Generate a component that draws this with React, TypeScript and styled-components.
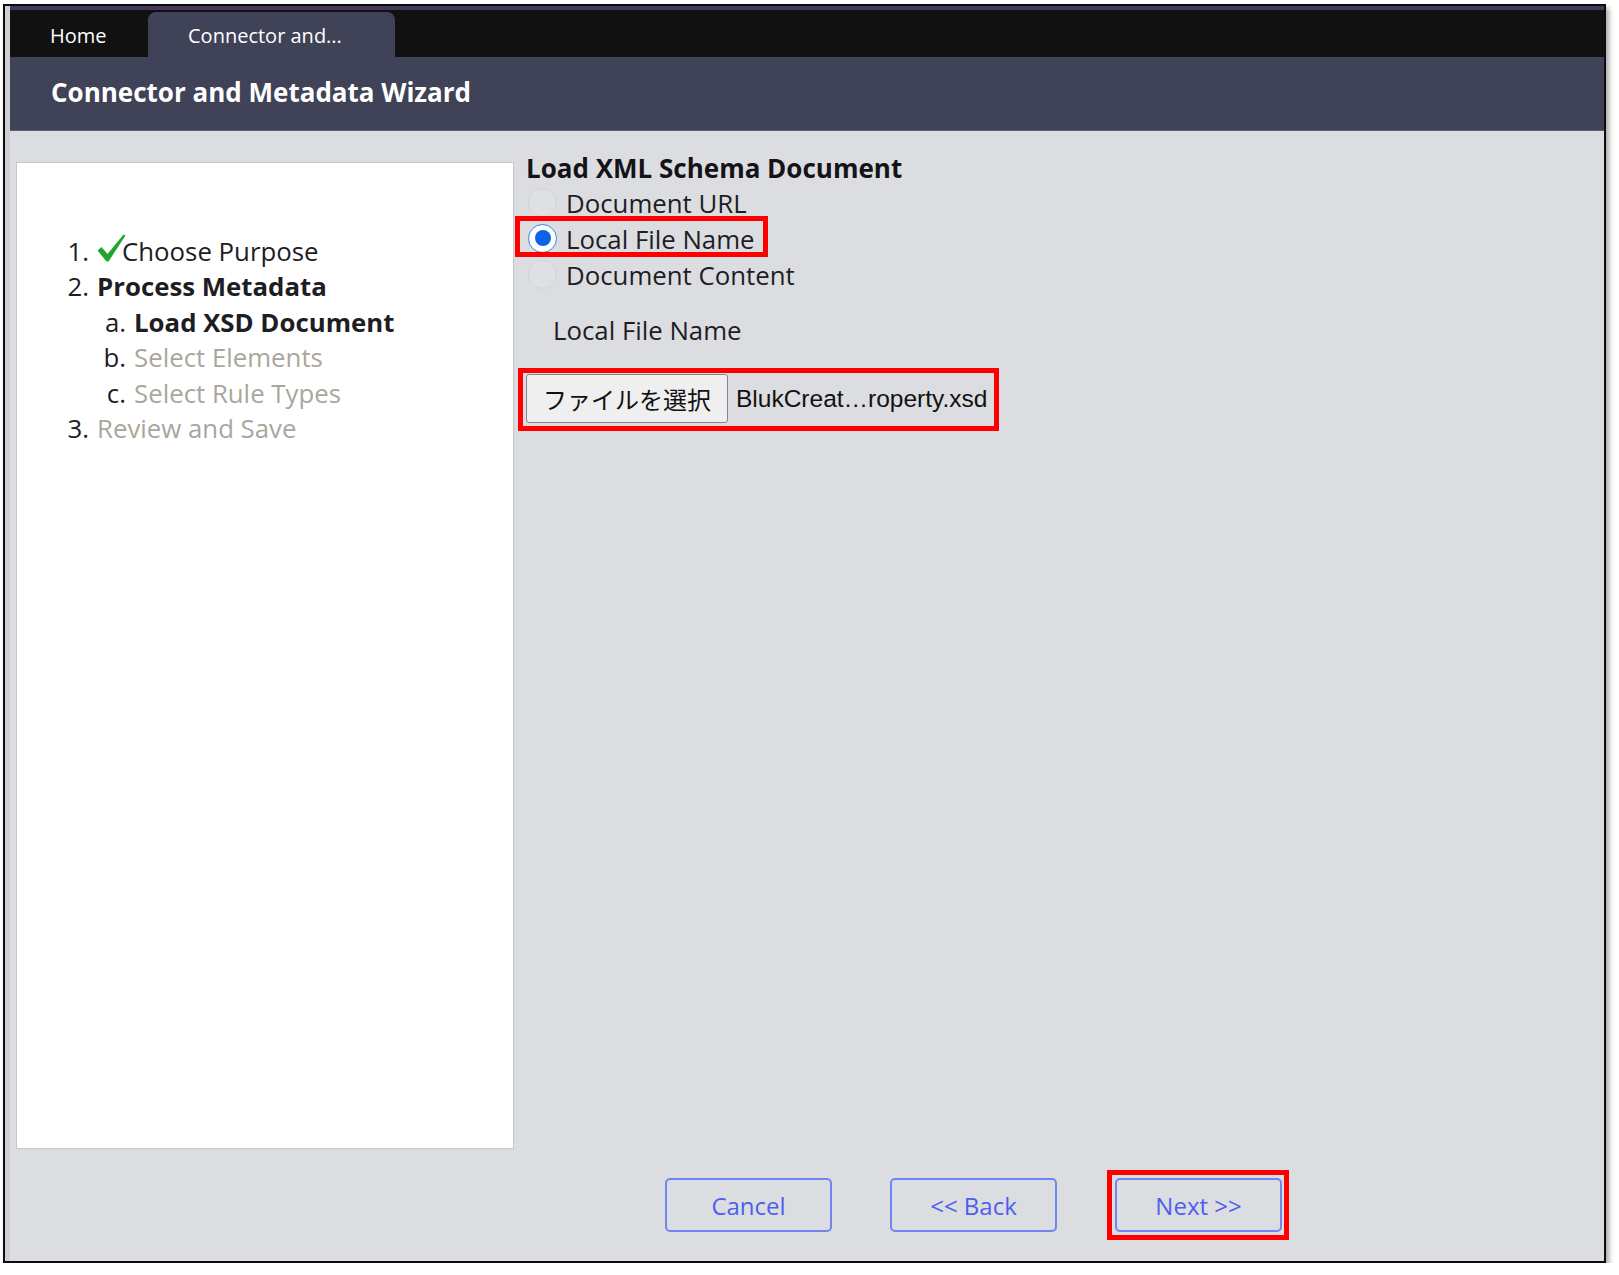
import React from "react";
import styled, { createGlobalStyle, css } from "styled-components";

const GlobalStyle = createGlobalStyle`
  html, body { margin: 0; padding: 0; background: #ffffff; }
  body { font-family: "Open Sans", "Noto Sans", sans-serif; }
  * { box-sizing: border-box; }
`;

const redBox = css`
  content: "";
  position: absolute;
  border: 5px solid #ff0000;
  pointer-events: none;
`;

const Frame = styled.div`
  margin: 4px 0 0 3px;
  width: 1603px;
  height: 1259px;
  border: 2px solid #0c0c0c;
  box-shadow: 3px 4px 5px rgba(0, 0, 0, 0.35);
  display: flex;
  background: #dcdde1;
`;

const SideStrip = styled.div`
  width: 5px;
  flex-shrink: 0;
  background: #cfcfd3;
`;

const Window = styled.div`
  flex: 1;
  min-width: 0;
  display: flex;
  flex-direction: column;
`;

const TopStripe = styled.div`
  height: 4px;
  background: #45395a;
`;

const TabBar = styled.div`
  height: 47px;
  background: #111111;
  display: flex;
  align-items: flex-end;
`;

const Tab = styled.div<{ $active?: boolean }>`
  height: 45px;
  width: ${(p) => (p.$active ? "247px" : "138px")};
  padding: 2px 0 0 40px;
  display: flex;
  align-items: center;
  color: #ffffff;
  font-size: 20px;
  background: ${(p) => (p.$active ? "#404257" : "transparent")};
  border-radius: 8px 8px 0 0;
  white-space: nowrap;
`;

const Header = styled.div`
  height: 74px;
  background: #404257;
  border-bottom: 1px solid #5d5f72;
  display: flex;
  align-items: center;
  padding: 0 0 4px 41px;
`;

const Title = styled.h1`
  margin: 0;
  color: #ffffff;
  font-size: 26px;
  font-weight: 700;
`;

const Body = styled.div`
  flex: 1;
  display: flex;
  flex-direction: column;
  background: #dcdde1;
`;

const Columns = styled.div`
  height: 1018px;
  display: flex;
  align-items: flex-start;
  padding: 21px 0 0 6px;
`;

const StepsPanel = styled.div`
  margin-top: 10px;
  width: 498px;
  height: 987px;
  background: #ffffff;
  border: 1px solid #c6c7cb;
  padding-top: 70px;
`;

const StepRow = styled.div<{ $level: number }>`
  display: flex;
  align-items: center;
  height: 35.5px;
  padding-left: ${(p) => (p.$level === 1 ? 45 : 82)}px;
  font-size: 25.8px;
  color: #1d1d24;
  white-space: nowrap;
`;

const Marker = styled.span`
  width: 27px;
  text-align: right;
  margin-right: 8px;
  color: #1d1d24;
`;

const StepText = styled.span<{ $state: "done" | "current" | "todo" }>`
  font-weight: ${(p) => (p.$state === "current" ? 700 : 400)};
  color: ${(p) => (p.$state === "todo" ? "#aaa69d" : "#1d1d24")};
  display: inline-flex;
  align-items: center;
`;

const CheckIcon = styled.svg`
  width: 29px;
  height: 28px;
  margin: -6px -4px 0 0;
  flex-shrink: 0;
`;

const Content = styled.div`
  margin-left: 12px;
  display: flex;
  flex-direction: column;
  align-items: flex-start;
`;

const SectionTitle = styled.h2`
  margin: 0;
  font-size: 26px;
  line-height: 33px;
  font-weight: 700;
  color: #141418;
`;

const RadioRow = styled.label<{ $highlight?: boolean }>`
  position: relative;
  display: inline-flex;
  align-items: center;
  height: 36px;
  margin-left: 2px;
  font-size: 25.8px;
  color: #1d1d24;
  cursor: pointer;
  ${(p) =>
    p.$highlight &&
    css`
      &::after {
        ${redBox};
        left: -13px;
        right: -13px;
        top: -5px;
        bottom: 0;
      }
    `}
`;

const RadioCircle = styled.span<{ $checked?: boolean }>`
  width: 29px;
  height: 29px;
  border-radius: 50%;
  margin-right: 9px;
  margin-top: -2px;
  display: flex;
  align-items: center;
  justify-content: center;
  flex-shrink: 0;
  ${(p) =>
    p.$checked
      ? css`
          border: 1.5px solid #3a82e6;
          background: #ffffff;
          &::before {
            content: "";
            width: 16px;
            height: 16px;
            border-radius: 50%;
            background: #0b63e5;
          }
        `
      : css`
          border: 1.5px solid #d3d4d8;
          background: #dfe0e3;
        `}
`;

const FieldLabel = styled.div`
  margin-top: 19px;
  padding-left: 27px;
  font-size: 25.8px;
  line-height: 36px;
  color: #1d1d24;
`;

const FileRow = styled.div`
  position: relative;
  margin-top: 26px;
  display: inline-flex;
  align-items: center;
  &::after {
    ${redBox};
    left: -8px;
    right: -12px;
    top: -6px;
    bottom: -8px;
  }
`;

const FileButton = styled.button`
  height: 49px;
  padding: 0 16px;
  background: #efefef;
  border: 1px solid #858585;
  border-radius: 3px;
  font-family: "Noto Sans CJK JP", "Noto Sans CJK SC", sans-serif;
  font-size: 24px;
  color: #111111;
  cursor: pointer;
`;

const FileName = styled.span`
  margin-left: 8px;
  font-family: "Liberation Sans", Arial, sans-serif;
  font-size: 24.5px;
  color: #111111;
`;

const Footer = styled.div`
  display: flex;
  gap: 58px;
  padding: 29px 0 0 655px;
`;

const NavButton = styled.button<{ $highlight?: boolean }>`
  position: relative;
  width: 167px;
  height: 54px;
  border: 2px solid #7185f2;
  border-radius: 5px;
  background: transparent;
  font-family: "Open Sans", sans-serif;
  font-size: 24px;
  color: #4c5ff0;
  cursor: pointer;
  ${(p) =>
    p.$highlight &&
    css`
      &::after {
        ${redBox};
        left: -10px;
        right: -9px;
        top: -10px;
        bottom: -10px;
      }
    `}
`;

type Step = {
  level: number;
  marker: string;
  text: string;
  state: "done" | "current" | "todo";
};

const steps: Step[] = [
  { level: 1, marker: "1.", text: "Choose Purpose", state: "done" },
  { level: 1, marker: "2.", text: "Process Metadata", state: "current" },
  { level: 2, marker: "a.", text: "Load XSD Document", state: "current" },
  { level: 2, marker: "b.", text: "Select Elements", state: "todo" },
  { level: 2, marker: "c.", text: "Select Rule Types", state: "todo" },
  { level: 1, marker: "3.", text: "Review and Save", state: "todo" },
];

const options = [
  { label: "Document URL", checked: false },
  { label: "Local File Name", checked: true },
  { label: "Document Content", checked: false },
];

export default function App() {
  return (
    <>
      <GlobalStyle />
      <Frame>
        <SideStrip />
        <Window>
          <TopStripe />
          <TabBar>
            <Tab>Home</Tab>
            <Tab $active>Connector and...</Tab>
          </TabBar>
          <Header>
            <Title>Connector and Metadata Wizard</Title>
          </Header>
          <Body>
            <Columns>
              <StepsPanel>
                {steps.map((s) => (
                  <StepRow key={s.text} $level={s.level}>
                    <Marker>{s.marker}</Marker>
                    <StepText $state={s.state}>
                      {s.state === "done" && (
                        <CheckIcon viewBox="0 0 29 28">
                          <path
                            d="M0.5 16.5 L4.5 13 L10.5 20 L26.5 0.5 L28.5 1.5 L11.5 27.5 L9.5 27.5 Z"
                            fill="#22a52b"
                          />
                        </CheckIcon>
                      )}
                      {s.text}
                    </StepText>
                  </StepRow>
                ))}
              </StepsPanel>
              <Content>
                <SectionTitle>Load XML Schema Document</SectionTitle>
                {options.map((o) => (
                  <RadioRow key={o.label} $highlight={o.checked}>
                    <RadioCircle $checked={o.checked} />
                    {o.label}
                  </RadioRow>
                ))}
                <FieldLabel>Local File Name</FieldLabel>
                <FileRow>
                  <FileButton>ファイルを選択</FileButton>
                  <FileName>BlukCreat…roperty.xsd</FileName>
                </FileRow>
              </Content>
            </Columns>
            <Footer>
              <NavButton>Cancel</NavButton>
              <NavButton>&lt;&lt; Back</NavButton>
              <NavButton $highlight>Next &gt;&gt;</NavButton>
            </Footer>
          </Body>
        </Window>
      </Frame>
    </>
  );
}
